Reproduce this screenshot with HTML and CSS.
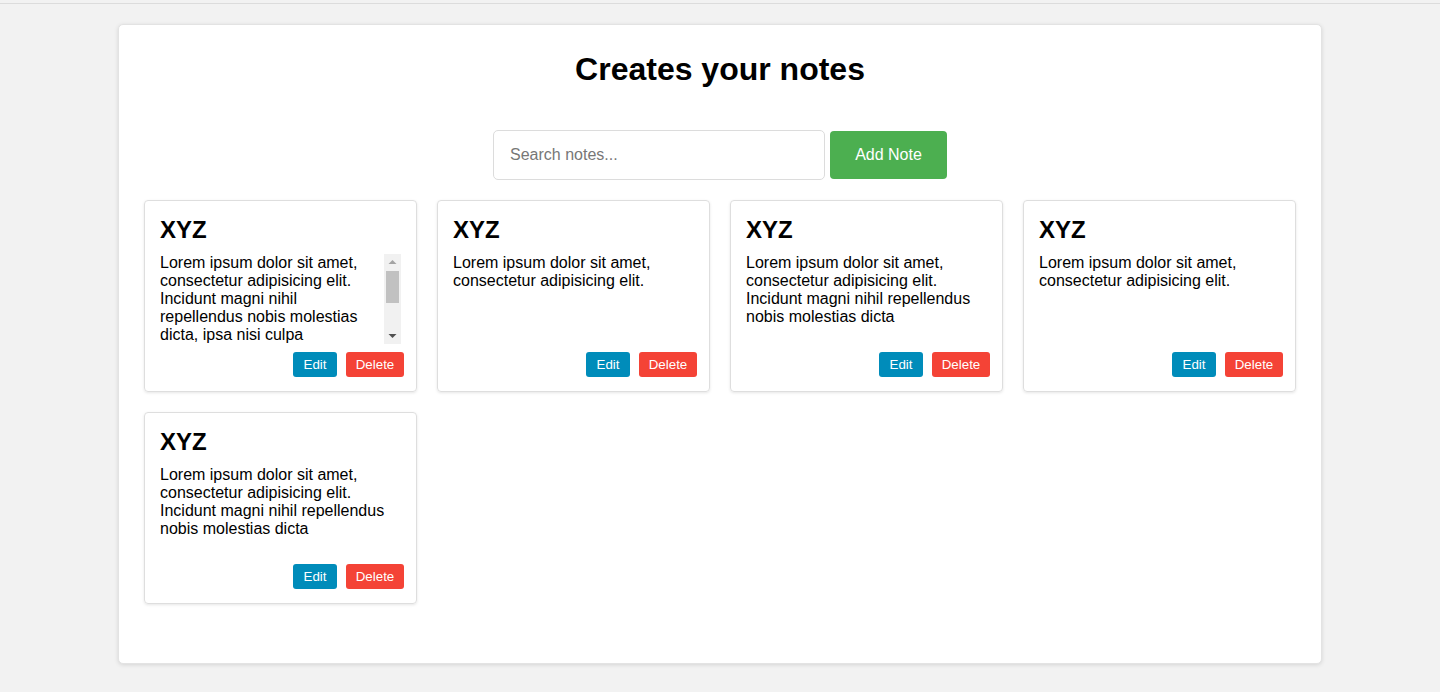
FILE: index.html
```html
<!DOCTYPE html>
<html lang="en">
<head>
<meta charset="UTF-8">
<title>Notes</title>
<link rel="stylesheet" href="styles.css">
</head>
<body>
<div class="topline"></div>
<div class="container">
  <h1 class="title">Creates your notes</h1>
  <div class="toolbar">
    <input class="search" type="text" placeholder="Search notes...">
    <button class="add-btn">Add Note</button>
  </div>
  <div class="notes">
    <div class="note">
      <h3 class="note-title">XYZ</h3>
      <div class="note-body">
        <p class="note-text">Lorem ipsum dolor sit amet, consectetur adipisicing elit. Incidunt magni nihil repellendus nobis molestias dicta, ipsa nisi culpa quibusdam voluptatem aut eveniet ullam quas. Quod, sint dolore.</p>
        <div class="scrollbar">
          <svg class="arrow" width="17" height="17" viewBox="0 0 17 17"><polygon points="8.5,6 12.5,10 4.5,10" fill="#a3a3a3"/></svg>
          <div class="track"><div class="thumb"></div></div>
          <svg class="arrow" width="17" height="17" viewBox="0 0 17 17"><polygon points="4.5,7 12.5,7 8.5,11" fill="#505050"/></svg>
        </div>
      </div>
      <div class="actions"><button class="btn edit">Edit</button><button class="btn delete">Delete</button></div>
    </div>
    <div class="note">
      <h3 class="note-title">XYZ</h3>
      <div class="note-body">
        <p class="note-text">Lorem ipsum dolor sit amet, consectetur adipisicing elit.</p>
      </div>
      <div class="actions"><button class="btn edit">Edit</button><button class="btn delete">Delete</button></div>
    </div>
    <div class="note">
      <h3 class="note-title">XYZ</h3>
      <div class="note-body">
        <p class="note-text">Lorem ipsum dolor sit amet, consectetur adipisicing elit. Incidunt magni nihil repellendus nobis molestias dicta</p>
      </div>
      <div class="actions"><button class="btn edit">Edit</button><button class="btn delete">Delete</button></div>
    </div>
    <div class="note">
      <h3 class="note-title">XYZ</h3>
      <div class="note-body">
        <p class="note-text">Lorem ipsum dolor sit amet, consectetur adipisicing elit.</p>
      </div>
      <div class="actions"><button class="btn edit">Edit</button><button class="btn delete">Delete</button></div>
    </div>
    <div class="note">
      <h3 class="note-title">XYZ</h3>
      <div class="note-body">
        <p class="note-text">Lorem ipsum dolor sit amet, consectetur adipisicing elit. Incidunt magni nihil repellendus nobis molestias dicta</p>
      </div>
      <div class="actions"><button class="btn edit">Edit</button><button class="btn delete">Delete</button></div>
    </div>
  </div>
</div>
</body>
</html>
```

FILE: styles.css
```css
* { box-sizing: border-box; }

html, body {
  margin: 0;
  padding: 0;
  background: #f2f2f2;
  font-family: "Liberation Sans", Arial, sans-serif;
  color: #000;
}

body {
  padding-top: 3px;
  padding-bottom: 28px;
}

.topline {
  height: 1px;
  background: #dcdcdc;
}

.container {
  width: 1204px;
  margin: 20px auto 0;
  background: #fff;
  border: 1px solid #e3e3e3;
  border-radius: 5px;
  box-shadow: 0 1px 4px rgba(0, 0, 0, 0.12);
  padding: 26px 25px 59px;
}

.title {
  margin: 0;
  text-align: center;
  font-size: 32px;
  font-weight: bold;
  line-height: 37px;
}

.toolbar {
  display: flex;
  justify-content: center;
  align-items: center;
  gap: 5px;
  margin-top: 42px;
}

.search {
  width: 332px;
  height: 50px;
  border: 1px solid #dcdcdc;
  border-radius: 5px;
  padding: 0 16px;
  font-family: "Liberation Sans", Arial, sans-serif;
  font-size: 16px;
  color: #333;
  outline: none;
}

.search::placeholder {
  color: #777;
}

.add-btn {
  width: 117px;
  height: 48px;
  border: none;
  border-radius: 4px;
  background: #4caf50;
  color: #fff;
  font-family: "Liberation Sans", Arial, sans-serif;
  font-size: 16px;
  cursor: pointer;
}

.notes {
  display: grid;
  grid-template-columns: repeat(4, 273px);
  column-gap: 20px;
  row-gap: 20px;
  margin-top: 20px;
}

.note {
  border: 1px solid #dedede;
  border-radius: 4px;
  box-shadow: 0 1px 3px rgba(0, 0, 0, 0.1);
  padding: 15px 15px 14px;
  display: flex;
  flex-direction: column;
}

.note-title {
  margin: 0 0 11px;
  font-size: 24px;
  line-height: 27px;
  font-weight: bold;
}

.note-body {
  display: flex;
  height: 90px;
}

.note-text {
  flex: 1;
  margin: 0;
  font-size: 16px;
  line-height: 18px;
  overflow: hidden;
}

.scrollbar {
  width: 17px;
  height: 90px;
  background: #f1f1f1;
  display: flex;
  flex-direction: column;
  flex-shrink: 0;
}

.arrow {
  display: block;
  flex-shrink: 0;
}

.track {
  flex: 1;
  padding: 0 2px;
}

.thumb {
  height: 32px;
  background: #c1c1c1;
}

.actions {
  display: flex;
  justify-content: flex-end;
  gap: 9px;
  margin-top: 8px;
  margin-right: -3px;
}

.btn {
  height: 25px;
  padding: 0;
  border: none;
  border-radius: 3px;
  color: #fff;
  font-family: "Liberation Sans", Arial, sans-serif;
  font-size: 13.333px;
  cursor: pointer;
}

.edit {
  width: 44px;
  background: #008cba;
}

.delete {
  width: 58px;
  background: #f44336;
}
```
